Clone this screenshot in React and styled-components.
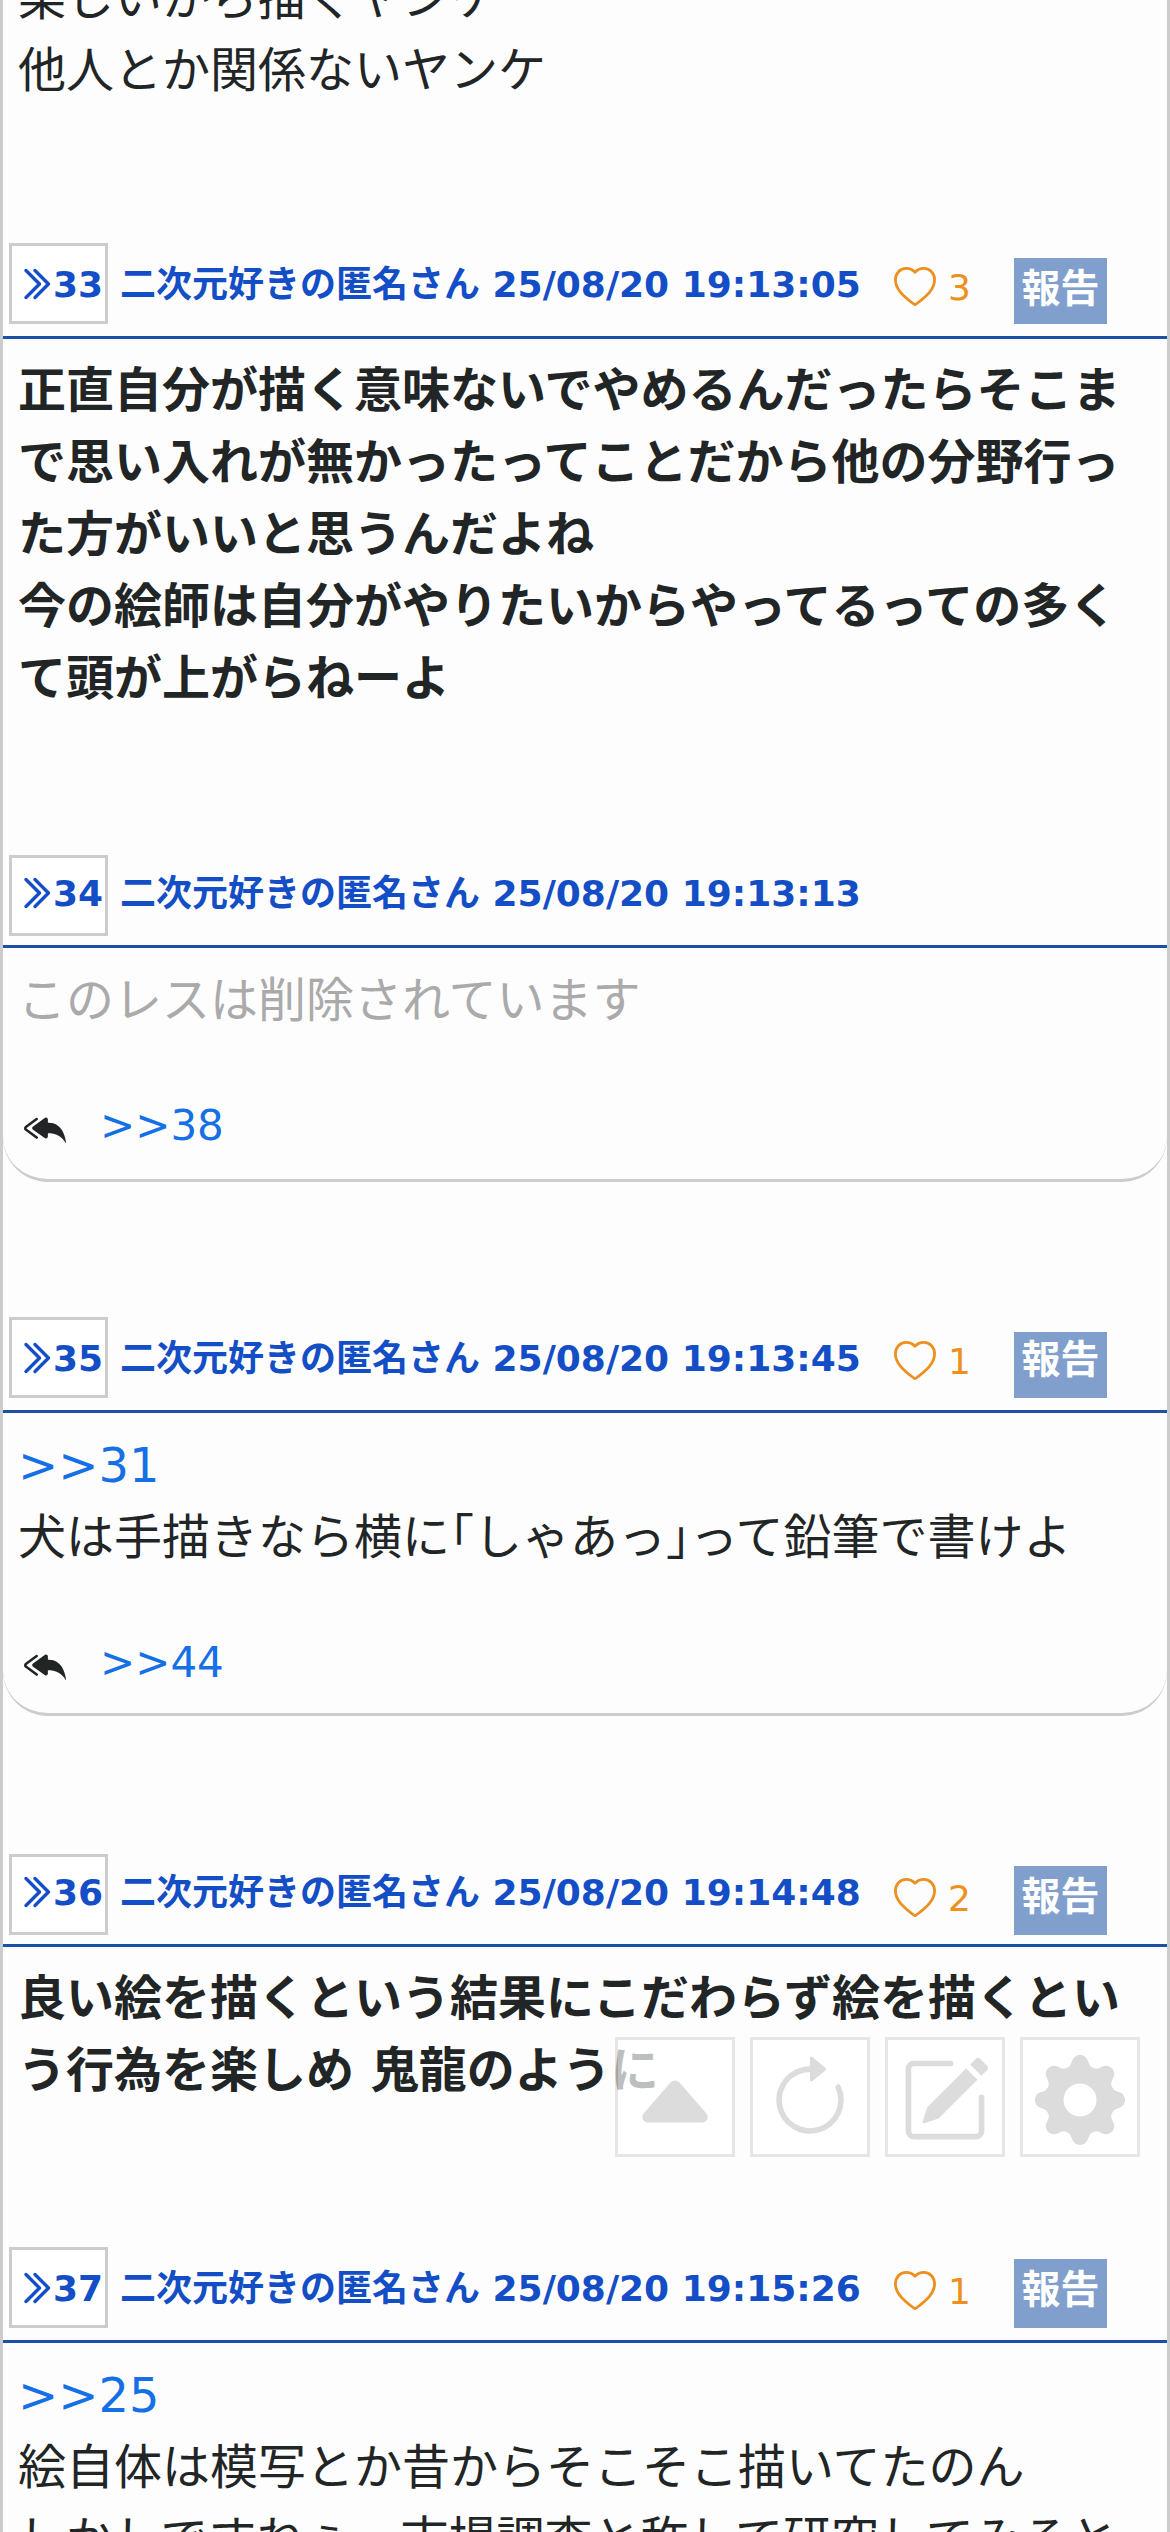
import { Fragment } from 'react';
import styled, { createGlobalStyle } from 'styled-components';
import {
	BsArrowClockwise,
	BsCaretUpFill,
	BsChevronDoubleRight,
	BsGearFill,
	BsPencilSquare,
	BsReplyAllFill,
} from 'react-icons/bs';

const colors = {
	border: '#cccccc',
	rule: '#1c4fa8',
	name: '#134ec6',
	link: '#1570e6',
	text: '#222526',
	deleted: '#aaaaaa',
	like: '#ec9020',
	report: '#819fcd',
};

const GlobalStyle = createGlobalStyle`
	* {
		box-sizing: border-box;
	}
	body {
		margin: 0;
		background: #fdfdfd;
		font-family: 'DejaVu Sans', 'Noto Sans CJK JP', sans-serif;
		color: ${colors.text};
	}
`;

const Page = styled.main`
	width: 1170px;
	height: 2532px;
	overflow: hidden;
	border-left: 3px solid ${colors.border};
	border-right: 3px solid ${colors.border};
`;

const Post = styled.article`
	margin-top: ${(props) => props.$gap}px;
`;

const Header = styled.header`
	display: flex;
	align-items: flex-start;
	height: 96px;
	padding-left: 6px;
	border-bottom: 3px solid ${colors.rule};
	color: ${colors.name};
	font-size: 36px;
	font-weight: bold;
	line-height: 54px;
	white-space: nowrap;
`;

const NumberBox = styled.span`
	display: flex;
	width: 99px;
	height: 81px;
	margin-top: ${(props) => props.$offset}px;
	padding: ${(props) => 12 - props.$offset}px 0 0 5px;
	border: 3px solid ${colors.border};
	background: #fff;
	> svg {
		flex: none;
		width: 36px;
		height: 36px;
		margin-top: 8px;
		stroke: currentColor;
		stroke-width: 0.5;
	}
`;

const Name = styled.span`
	width: 780px;
	padding: 15px 0 0 12px;
`;

const Likes = styled.span`
	display: flex;
	width: 126px;
	padding: ${(props) => 18 + props.$offset}px 0 0 6px;
	color: ${colors.like};
	font-weight: normal;
	> svg {
		margin: 6px 12px 0 0;
	}
`;

const Report = styled.button`
	display: flex;
	justify-content: center;
	align-items: flex-start;
	width: 93px;
	height: ${(props) => props.$height}px;
	margin-top: ${(props) => props.$top}px;
	padding: ${(props) => props.$pad}px 0 0;
	border: 0;
	background: ${colors.report};
	color: #fff;
	font: bold 39px/48px 'Noto Sans CJK JP', sans-serif;
`;

const Body = styled.div`
	margin-bottom: ${(props) => (props.$bold ? 0 : -1)}px;
	padding: ${(props) => (props.$bold ? 15 : 16)}px 15px 0;
	color: ${(props) => (props.$deleted ? colors.deleted : 'inherit')};
	font-size: 48px;
	font-weight: ${(props) => (props.$bold ? 'bold' : 'normal')};
	line-height: 72px;
	white-space: nowrap;
`;

const Anchor = styled.a`
	color: ${colors.link};
`;

const Replies = styled.div`
	display: flex;
	height: ${(props) => props.$height}px;
	padding: 59px 0 0 21px;
	border-bottom: 3px solid ${colors.border};
	border-radius: 0 0 45px 45px;
	font-size: 42px;
	line-height: 63px;
	> svg {
		width: 42px;
		height: 42px;
		margin: 13px 34px 0 0;
	}
`;

const Toolbar = styled.nav`
	position: fixed;
	top: 2037px;
	left: 615px;
	display: flex;
	gap: 15px;
	opacity: 0.7;
`;

const ToolButton = styled.button`
	display: flex;
	align-items: flex-start;
	width: 120px;
	height: 120px;
	padding: 15px 0 0 12px;
	border: 3px solid #dcdcdc;
	background: #fff;
	color: #cdcdcd;
	> svg {
		flex: none;
		width: 90px;
		height: 90px;
	}
`;

const posts = [
	{
		id: 33,
		time: '25/08/20 19:13:05',
		likes: 3,
		gap: 138,
		bold: true,
		report: { top: 15, height: 66, pad: 3 },
		lines: [
			'正直自分が描く意味ないでやめるんだったらそこま',
			'で思い入れが無かったってことだから他の分野行っ',
			'た方がいいと思うんだよね',
			'今の絵師は自分がやりたいからやってるっての多く',
			'て頭が上がらねーよ',
		],
	},
	{
		id: 34,
		time: '25/08/20 19:13:13',
		gap: 138,
		offset: 3,
		deleted: true,
		lines: ['このレスは削除されています'],
		reply: 38,
		replyHeight: 147,
	},
	{
		id: 35,
		time: '25/08/20 19:13:45',
		likes: 1,
		gap: 135,
		report: { top: 15, height: 66, pad: 0 },
		anchor: 31,
		lines: ['犬は手描きなら横に｢しゃあっ｣って鉛筆で書けよ'],
		reply: 44,
		replyHeight: 144,
	},
	{
		id: 36,
		time: '25/08/20 19:14:48',
		likes: 2,
		gap: 135,
		offset: 3,
		bold: true,
		report: { top: 15, height: 69, pad: 3 },
		lines: ['良い絵を描くという結果にこだわらず絵を描くとい', 'う行為を楽しめ 鬼龍のように'],
	},
	{
		id: 37,
		time: '25/08/20 19:15:26',
		likes: 1,
		gap: 141,
		report: { top: 12, height: 69, pad: 3 },
		anchor: 25,
		lines: ['絵自体は模写とか昔からそこそこ描いてたのん', 'しかしですねぇ、市場調査と称して研究してみると'],
	},
];

const Heart = () => (
	<svg width='42' height='39' viewBox='0 0 42 39' fill='none' stroke='currentColor' strokeWidth='2.8' strokeLinejoin='round'>
		<path d='M21 5.2C18.2 2.4 15.6 1.4 12.2 1.4C6 1.4 1.4 6.4 1.4 12.8C1.4 22.2 9.6 29.3 19.8 37Q21 38 22.2 37C32.4 29.3 40.6 22.2 40.6 12.8C40.6 6.4 36 1.4 29.8 1.4C26.4 1.4 23.8 2.4 21 5.2Z' />
	</svg>
);

const Lines = ({ lines }) =>
	lines.map((line) => (
		<Fragment key={line}>
			{line}
			<br />
		</Fragment>
	));

const Response = ({ post }) => (
	<Post $gap={post.gap}>
		<Header>
			<NumberBox $offset={post.offset || 0}>
				<BsChevronDoubleRight />
				{post.id}
			</NumberBox>
			<Name>二次元好きの匿名さん {post.time}</Name>
			{post.likes && (
				<>
					<Likes $offset={post.offset || 0}>
						<Heart />
						{post.likes}
					</Likes>
					<Report $top={post.report.top} $height={post.report.height} $pad={post.report.pad}>
						報告
					</Report>
				</>
			)}
		</Header>
		<Body $bold={post.bold} $deleted={post.deleted}>
			{post.anchor && (
				<>
					<Anchor>&gt;&gt;{post.anchor}</Anchor>
					<br />
				</>
			)}
			<Lines lines={post.lines} />
		</Body>
		{post.reply && (
			<Replies $height={post.replyHeight}>
				<BsReplyAllFill />
				<Anchor>&gt;&gt;{post.reply}</Anchor>
			</Replies>
		)}
	</Post>
);

const App = () => (
	<>
		<GlobalStyle />
		<Page>
			<Post $gap={-54}>
				<Body>
					<Lines lines={['楽しいから描くヤンケ', '他人とか関係ないヤンケ']} />
				</Body>
			</Post>
			{posts.map((post) => (
				<Response key={post.id} post={post} />
			))}
		</Page>
		<Toolbar>
			<ToolButton>
				<BsCaretUpFill />
			</ToolButton>
			<ToolButton>
				<BsArrowClockwise />
			</ToolButton>
			<ToolButton>
				<BsPencilSquare />
			</ToolButton>
			<ToolButton>
				<BsGearFill />
			</ToolButton>
		</Toolbar>
	</>
);

export default App;
